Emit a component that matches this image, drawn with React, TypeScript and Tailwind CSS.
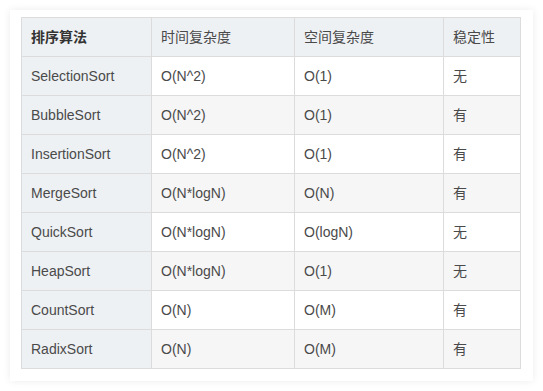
import React from 'react'

const rows = [
  ['SelectionSort', 'O(N^2)', 'O(1)', '无'],
  ['BubbleSort', 'O(N^2)', 'O(1)', '有'],
  ['InsertionSort', 'O(N^2)', 'O(1)', '有'],
  ['MergeSort', 'O(N*logN)', 'O(N)', '有'],
  ['QuickSort', 'O(N*logN)', 'O(logN)', '无'],
  ['HeapSort', 'O(N*logN)', 'O(1)', '无'],
  ['CountSort', 'O(N)', 'O(M)', '有'],
  ['RadixSort', 'O(N)', 'O(M)', '有'],
]

export default function App() {
  return (
    <div className="w-[543px] h-[391px] bg-white p-[10px] font-['Liberation_Sans','Noto_Sans_CJK_SC',sans-serif]">
      <div className="w-[523px] h-[371px] bg-white pt-[7px] pl-[11px] shadow-[0_0_8px_rgba(0,0,0,0.08)]">
        <table className="border-collapse text-[14px] text-[#4a4a4a] leading-none">
          <thead>
            <tr className="h-[39px] bg-[#eef1f4]">
              <th className="w-[130px] border border-[#dcdcdc] px-[9px] text-left font-bold text-[#333]">排序算法</th>
              <th className="w-[143px] border border-[#dcdcdc] px-[9px] text-left font-normal">时间复杂度</th>
              <th className="w-[149px] border border-[#dcdcdc] px-[9px] text-left font-normal">空间复杂度</th>
              <th className="w-[77px] border border-[#dcdcdc] px-[9px] text-left font-normal">稳定性</th>
            </tr>
          </thead>
          <tbody>
            {rows.map((r, i) => (
              <tr key={r[0]} className={`h-[39px] ${i % 2 === 1 ? 'bg-[#f6f6f6]' : 'bg-white'}`}>
                <td className="border border-[#dcdcdc] px-[9px] bg-[#eef1f4]">{r[0]}</td>
                <td className="border border-[#dcdcdc] px-[9px]">{r[1]}</td>
                <td className="border border-[#dcdcdc] px-[9px]">{r[2]}</td>
                <td className="border border-[#dcdcdc] px-[9px]">{r[3]}</td>
              </tr>
            ))}
          </tbody>
        </table>
      </div>
    </div>
  )
}
